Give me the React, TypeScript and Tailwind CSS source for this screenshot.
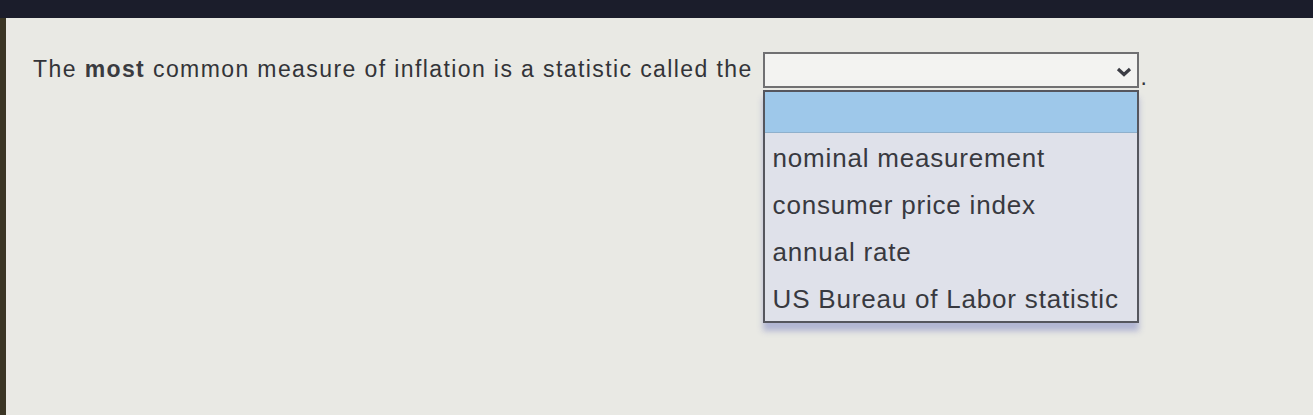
const options = [
  "nominal measurement",
  "consumer price index",
  "annual rate",
  "US Bureau of Labor statistic",
];

const App = () => {
  return (
    <div className="w-[1313px] h-[415px] bg-[#1b1d2b] flex flex-col overflow-hidden" style={{ fontFamily: '"Liberation Sans", Arial, sans-serif' }}>
      <div className="h-[18px] shrink-0" />
      <div className="flex-1 flex">
        <div className="w-[6px] bg-[#3a3524]" />
        <div className="flex-1 bg-[#e9e9e4] pt-[34px] pl-[27px]">
          <div className="flex items-start">
            <p className="text-[23px] text-[#333438] mr-[10px] tracking-[1.4px] whitespace-nowrap">
              The <span className="font-bold text-[#3a3b40]">most</span> common measure of inflation is a statistic called the
            </p>
            <div className="relative w-[376px] shrink-0">
              <div className="h-[36px] border-2 border-[#707072] bg-[#f3f3f1] flex items-center justify-end pr-[5px]">
                <svg width="16" height="10" viewBox="0 0 16 10" className="mt-[4px]">
                  <path d="M2 2 L8 7.5 L14 2" fill="none" stroke="#3c3d44" strokeWidth="3.2" />
                </svg>
              </div>
              <div className="absolute left-0 top-[38px] w-[376px] border-2 border-[#55565e] bg-[#dfe1ea] shadow-[0_8px_6px_rgba(110,120,190,0.45)]">
                <div className="h-[41px] bg-[#9ec8ea] border-b border-[#8fb0cc]" />
                {options.map((o) => (
                  <div key={o} className="h-[47px] flex items-center pl-[8px] pt-[3px] text-[26px] tracking-[0.8px] text-[#383940] whitespace-nowrap">
                    {o}
                  </div>
                ))}
              </div>
            </div>
            <span className="text-[23px] text-[#333438] mt-[8px] ml-[2px]">.</span>
          </div>
        </div>
      </div>
    </div>
  );
};

export default App;
